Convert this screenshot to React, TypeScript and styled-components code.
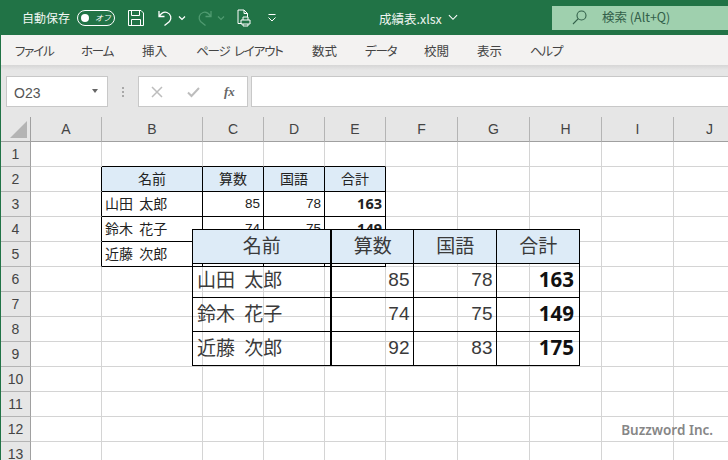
import React from "react";
import styled, { createGlobalStyle } from "styled-components";

const UI_FONT = `"Noto Sans CJK JP", "Noto Sans", sans-serif`;
const CELL_FONT = `"Noto Sans CJK JP", "Noto Sans", sans-serif`;
const NUM_FONT = `"Liberation Sans", Arial, sans-serif`;
const BOLD_FONT = `"Noto Sans", "Liberation Sans", sans-serif`;

const Global = createGlobalStyle`
  html, body { margin: 0; padding: 0; width: 728px; height: 460px; overflow: hidden; background: #fff; }
  * { box-sizing: border-box; }
`;

const Frame = styled.div`
  width: 728px;
  height: 460px;
  overflow: hidden;
  display: flex;
  flex-direction: column;
  border-left: 1px solid #217346;
  font-family: ${UI_FONT};
`;

const TitleBar = styled.header`
  height: 35px;
  flex: none;
  margin-left: -1px;
  background: #217346;
  display: flex;
  align-items: center;
  color: #fff;
  padding-left: 22px;
`;
const AutoSave = styled.span`
  font-size: 12px;
  width: 55px;
  color: #f2f7f4;
`;
const Toggle = styled.span`
  width: 38px;
  height: 16px;
  border: 1px solid #fff;
  border-radius: 8px;
  display: flex;
  align-items: center;
  padding: 0 3px;
  font-size: 8px;
  font-style: italic;
  justify-content: space-between;
  color: #fff;
`;
const Knob = styled.i`
  width: 8px;
  height: 8px;
  border-radius: 50%;
  background: #fff;
`;
const QuickIcon = styled.svg<{ $ml: number; $dim?: boolean; $sw?: number }>`
  flex: none;
  margin-left: ${(p) => p.$ml}px;
  fill: none;
  stroke: ${(p) => (p.$dim ? "#4f9a70" : "currentColor")};
  stroke-width: ${(p) => p.$sw ?? 1};
`;
const FileName = styled.span`
  font-size: 12.5px;
  color: #eef5f0;
  margin: 1px 0 0 102px;
  width: 64px;
  white-space: nowrap;
`;
const SearchBox = styled.div`
  margin-left: auto;
  width: 176px;
  height: 24px;
  background: #9fd0ae;
  display: flex;
  align-items: center;
  padding-left: 20px;
  color: #33604a;
  font-size: 12.5px;
  gap: 15px;
`;
const SearchText = styled.span`
  margin-top: -2px;
  white-space: nowrap;
`;

const Ribbon = styled.nav`
  height: 30px;
  flex: none;
  background: #f3f2f1;
  display: flex;
  align-items: center;
  font-size: 12.5px;
  color: #444;
  font-feature-settings: "palt";
`;
const Tab = styled.span<{ $w: number; $kana?: boolean }>`
  width: ${(p) => p.$w}px;
  flex: none;
  white-space: nowrap;
  letter-spacing: ${(p) => (p.$kana ? "-1.2px" : "0")};
  word-spacing: 3px;
  &:first-child { margin-left: 14px; }
`;

const FormulaBar = styled.div`
  height: 52px;
  flex: none;
  background: linear-gradient(#d6d6d6 0, #e6e6e6 5px, #e6e6e6 100%);
  display: flex;
  align-items: flex-start;
  padding: 11px 0 0 5px;
`;
const NameBox = styled.div`
  width: 102px;
  height: 31px;
  background: #fff;
  border: 1px solid #c8c8c8;
  display: flex;
  align-items: center;
  justify-content: space-between;
  padding: 2px 9px 0 7px;
  font-size: 14px;
  color: #555;
  font-family: ${NUM_FONT};
`;
const Caret = styled.i`
  width: 0;
  height: 0;
  margin-top: -3px;
  border-left: 3.5px solid transparent;
  border-right: 3.5px solid transparent;
  border-top: 4px solid #666;
`;
const Grip = styled.div`
  width: 30px;
  height: 31px;
  display: flex;
  flex-direction: column;
  justify-content: center;
  align-items: center;
  gap: 2px;
`;
const GripDot = styled.i`
  width: 2px;
  height: 2px;
  background: #a8a8a8;
`;
const FxBox = styled.div`
  width: 110px;
  height: 31px;
  background: #fff;
  border: 1px solid #c8c8c8;
  display: flex;
  align-items: center;
  padding-left: 12px;
  gap: 24px;
  color: #bdbdbd;
`;
const FxText = styled.span`
  font-family: "Liberation Serif", serif;
  font-style: italic;
  font-weight: 700;
  font-size: 13px;
  color: #666;
`;
const FormulaInput = styled.div`
  margin-left: 3px;
  flex: 1;
  height: 31px;
  background: #fff;
  border: 1px solid #c8c8c8;
  border-right: 0;
`;

const Sheet = styled.main`
  position: relative;
  flex: 1;
  overflow: hidden;
  background: #fff;
`;
const Grid = styled.div`
  display: grid;
  grid-template-columns: 30px 71px 101px 61px 61px 61px 72px 72px 72px 72px 72px;
  grid-auto-rows: 25px;
`;
const Corner = styled.div`
  background: #e6e6e6;
  border-right: 1px solid #a0a0a0;
  border-bottom: 1px solid #a0a0a0;
  display: flex;
  align-items: flex-end;
  justify-content: flex-end;
  padding: 0 3px 3px 0;
`;
const ColHead = styled.div`
  background: #e6e6e6;
  border-right: 1px solid #b4b4b4;
  border-bottom: 1px solid #a0a0a0;
  display: flex;
  align-items: center;
  justify-content: center;
  padding-bottom: 1px;
  font-family: ${NUM_FONT};
  font-size: 14px;
  color: #444;
`;
const RowHead = styled.div`
  background: #e6e6e6;
  border-right: 1px solid #a0a0a0;
  border-bottom: 1px solid #b4b4b4;
  display: flex;
  align-items: center;
  justify-content: center;
  padding-bottom: 1px;
  font-family: ${NUM_FONT};
  font-size: 14px;
  color: #444;
`;
const Cell = styled.div<{ $r: string; $b: string; $fill?: boolean; $align: string; $bold?: boolean; $num?: boolean }>`
  border-right: 1px solid ${(p) => p.$r};
  border-bottom: 1px solid ${(p) => p.$b};
  background: ${(p) => (p.$fill ? "#ddebf7" : "transparent")};
  display: flex;
  align-items: center;
  justify-content: ${(p) => p.$align};
  padding: 0 3px ${(p) => (p.$bold ? 2 : p.$num ? 1 : 3)}px;
  white-space: nowrap;
  overflow: hidden;
  font-family: ${(p) => (p.$bold ? BOLD_FONT : p.$num ? NUM_FONT : CELL_FONT)};
  font-size: ${(p) => (p.$bold ? 14.5 : p.$num ? 13.5 : 14)}px;
  font-weight: ${(p) => (p.$bold ? 700 : 400)};
  color: #222;
  word-spacing: 3px;
`;

const Picture = styled.figure`
  position: absolute;
  left: 191px;
  top: 112px;
  margin: 0;
  display: grid;
  grid-template-columns: 139px 82px 83px 83px;
  grid-auto-rows: 34px;
  border-left: 1px solid #000;
  border-top: 1px solid #000;
`;
const PicCell = styled.div<{ $head?: boolean; $thick?: boolean; $num?: boolean; $bold?: boolean }>`
  border-right: ${(p) => (p.$thick ? "2px" : "1px")} solid #000;
  border-bottom: 1px solid #000;
  background: ${(p) => (p.$head ? "#ddebf7" : "transparent")};
  display: flex;
  align-items: center;
  justify-content: ${(p) => (p.$head ? "center" : p.$num ? "flex-end" : "flex-start")};
  padding: 0 ${(p) => (p.$bold ? 5 : 3.5)}px ${(p) => (p.$bold ? 4 : p.$num ? 1 : 5)}px 4px;
  font-family: ${(p) => (p.$bold ? BOLD_FONT : p.$num ? NUM_FONT : CELL_FONT)};
  font-size: ${(p) => (p.$bold ? 20.5 : 19)}px;
  font-weight: ${(p) => (p.$bold ? 700 : 400)};
  color: ${(p) => (p.$bold ? "#111" : "#3a3a3a")};
  white-space: nowrap;
  word-spacing: 5px;
`;
const Watermark = styled.div`
  position: absolute;
  right: 15px;
  bottom: 21px;
  font-family: "Noto Sans", sans-serif;
  font-weight: 600;
  font-size: 13.5px;
  color: #868686;
`;

const people = [
  ["山田 太郎", 85, 78, 163],
  ["鈴木 花子", 74, 75, 149],
  ["近藤 次郎", 92, 83, 175],
] as const;
const heads = ["名前", "算数", "国語", "合計"];
const columns = ["A", "B", "C", "D", "E", "F", "G", "H", "I", "J"];
const GRID = "#d4d4d4";
const BLACK = "#000";

function tableValue(row: number, col: number): { text: string; head?: boolean; num?: boolean; bold?: boolean } | null {
  if (row < 2 || row > 5 || col < 1 || col > 4) return null;
  if (row === 2) return { text: heads[col - 1], head: true };
  const v = people[row - 3][col - 1];
  return { text: String(v), num: col > 1, bold: col === 4 };
}

function renderCell(row: number, col: number) {
  const inTable = (r: number, c: number) => r >= 2 && r <= 5 && c >= 1 && c <= 4;
  const right = inTable(row, col) || inTable(row, col + 1) ? BLACK : GRID;
  const bottom = inTable(row, col) || inTable(row + 1, col) ? BLACK : GRID;
  const v = tableValue(row, col);
  return (
    <Cell
      key={`${row}-${col}`}
      $r={right}
      $b={bottom}
      $fill={v?.head}
      $align={v?.head ? "center" : v?.num ? "flex-end" : "flex-start"}
      $bold={v?.bold}
      $num={v?.num}
    >
      {v?.text}
    </Cell>
  );
}

export default function App() {
  return (
    <Frame>
      <Global />
      <TitleBar>
        <AutoSave>自動保存</AutoSave>
        <Toggle>
          <Knob />
          オフ
        </Toggle>
        <QuickIcon $ml={12} width="18" height="18" viewBox="0 0 18 18">
          <path d="M1.5 1.5h12.5l2.5 2.5v12.5h-15z" />
          <path d="M4.5 1.5v5h8v-5M4.5 16.5v-6h9v6" />
        </QuickIcon>
        <QuickIcon $ml={12} $sw={1.3} width="18" height="18" viewBox="0 0 18 18">
          <path d="M2 2v5.5h5.5M2.5 7c2-3 4.5-4.5 7.5-3.500 4 1.500 5 6 2.500 9L7.500 16.500" />
        </QuickIcon>
        <QuickIcon $ml={3} $sw={1.2} width="8" height="6" viewBox="0 0 8 6">
          <path d="M1 1.500l3 3 3-3" />
        </QuickIcon>
        <QuickIcon $ml={9} $sw={1.3} $dim width="18" height="18" viewBox="0 0 18 18">
          <path d="M16 2v5.500h-5.500M15.500 7c-2-3-4.500-4.500-7.500-3.500-4 1.500-5 6-2.500 9l5 4" />
        </QuickIcon>
        <QuickIcon $ml={4} $sw={1.2} $dim width="8" height="6" viewBox="0 0 8 6">
          <path d="M1 1.500l3 3 3-3" />
        </QuickIcon>
        <QuickIcon $ml={11} width="16" height="18" viewBox="0 0 16 18">
          <path d="M5.500 14.500h-3.500v-13.500h6l3.500 3.500v3.500M8 1v3.500h3.500" />
          <path d="M5 11h9v4h-9zM7 11v-3h5v3M7 15v2h5v-2" />
        </QuickIcon>
        <QuickIcon $ml={15} width="10" height="10" viewBox="0 0 10 10">
          <path d="M1.500 1.500h7M1.500 4.500l3.500 3.500 3.500-3.500" />
        </QuickIcon>
        <FileName>成績表.xlsx</FileName>
        <QuickIcon $ml={5} $sw={1.2} width="10" height="7" viewBox="0 0 11 7">
          <path d="M1 1l4.500 4.500 4.500-4.500" />
        </QuickIcon>
        <SearchBox>
          <QuickIcon $ml={0} $sw={1.1} width="15" height="15" viewBox="0 0 15 15">
            <circle cx="9.500" cy="5.500" r="4.500" />
            <path d="M6.300 8.700l-5.300 5.300" />
          </QuickIcon>
          <SearchText>検索 (Alt+Q)</SearchText>
        </SearchBox>
      </TitleBar>

      <Ribbon>
        <Tab $w={66} $kana>ファイル</Tab>
        <Tab $w={61} $kana>ホーム</Tab>
        <Tab $w={54}>挿入</Tab>
        <Tab $w={116} $kana>ページ レイアウト</Tab>
        <Tab $w={53}>数式</Tab>
        <Tab $w={59} $kana>データ</Tab>
        <Tab $w={53}>校閲</Tab>
        <Tab $w={53}>表示</Tab>
        <Tab $w={40} $kana>ヘルプ</Tab>
      </Ribbon>

      <FormulaBar>
        <NameBox>
          O23
          <Caret />
        </NameBox>
        <Grip>
          <GripDot />
          <GripDot />
          <GripDot />
        </Grip>
        <FxBox>
          <svg width="12" height="12" viewBox="0 0 12 12" fill="none" stroke="currentColor" strokeWidth="1.500">
            <path d="M1 1l10 10M11 1l-10 10" />
          </svg>
          <svg width="13" height="12" viewBox="0 0 13 12" fill="none" stroke="currentColor" strokeWidth="2">
            <path d="M1 6.500l3.500 3.500 7.500-8" />
          </svg>
          <FxText>fx</FxText>
        </FxBox>
        <FormulaInput />
      </FormulaBar>

      <Sheet>
        <Grid>
          <Corner>
            <svg width="17" height="17" viewBox="0 0 17 17">
              <path d="M17 0v17h-17z" fill="#b4b4b4" />
            </svg>
          </Corner>
          {columns.map((c) => (
            <ColHead key={c}>{c}</ColHead>
          ))}
          {Array.from({ length: 13 }, (_, i) => i + 1).map((row) => (
            <React.Fragment key={row}>
              <RowHead>{row}</RowHead>
              {columns.map((_, col) => renderCell(row, col))}
            </React.Fragment>
          ))}
        </Grid>

        <Picture>
          {heads.map((h, i) => (
            <PicCell key={h} $head $thick={i === 0}>
              {h}
            </PicCell>
          ))}
          {people.map((p) => (
            <React.Fragment key={p[0]}>
              <PicCell $thick>{p[0]}</PicCell>
              <PicCell $num>{p[1]}</PicCell>
              <PicCell $num>{p[2]}</PicCell>
              <PicCell $num $bold>
                {p[3]}
              </PicCell>
            </React.Fragment>
          ))}
        </Picture>
        <Watermark>Buzzword Inc.</Watermark>
      </Sheet>
    </Frame>
  );
}
